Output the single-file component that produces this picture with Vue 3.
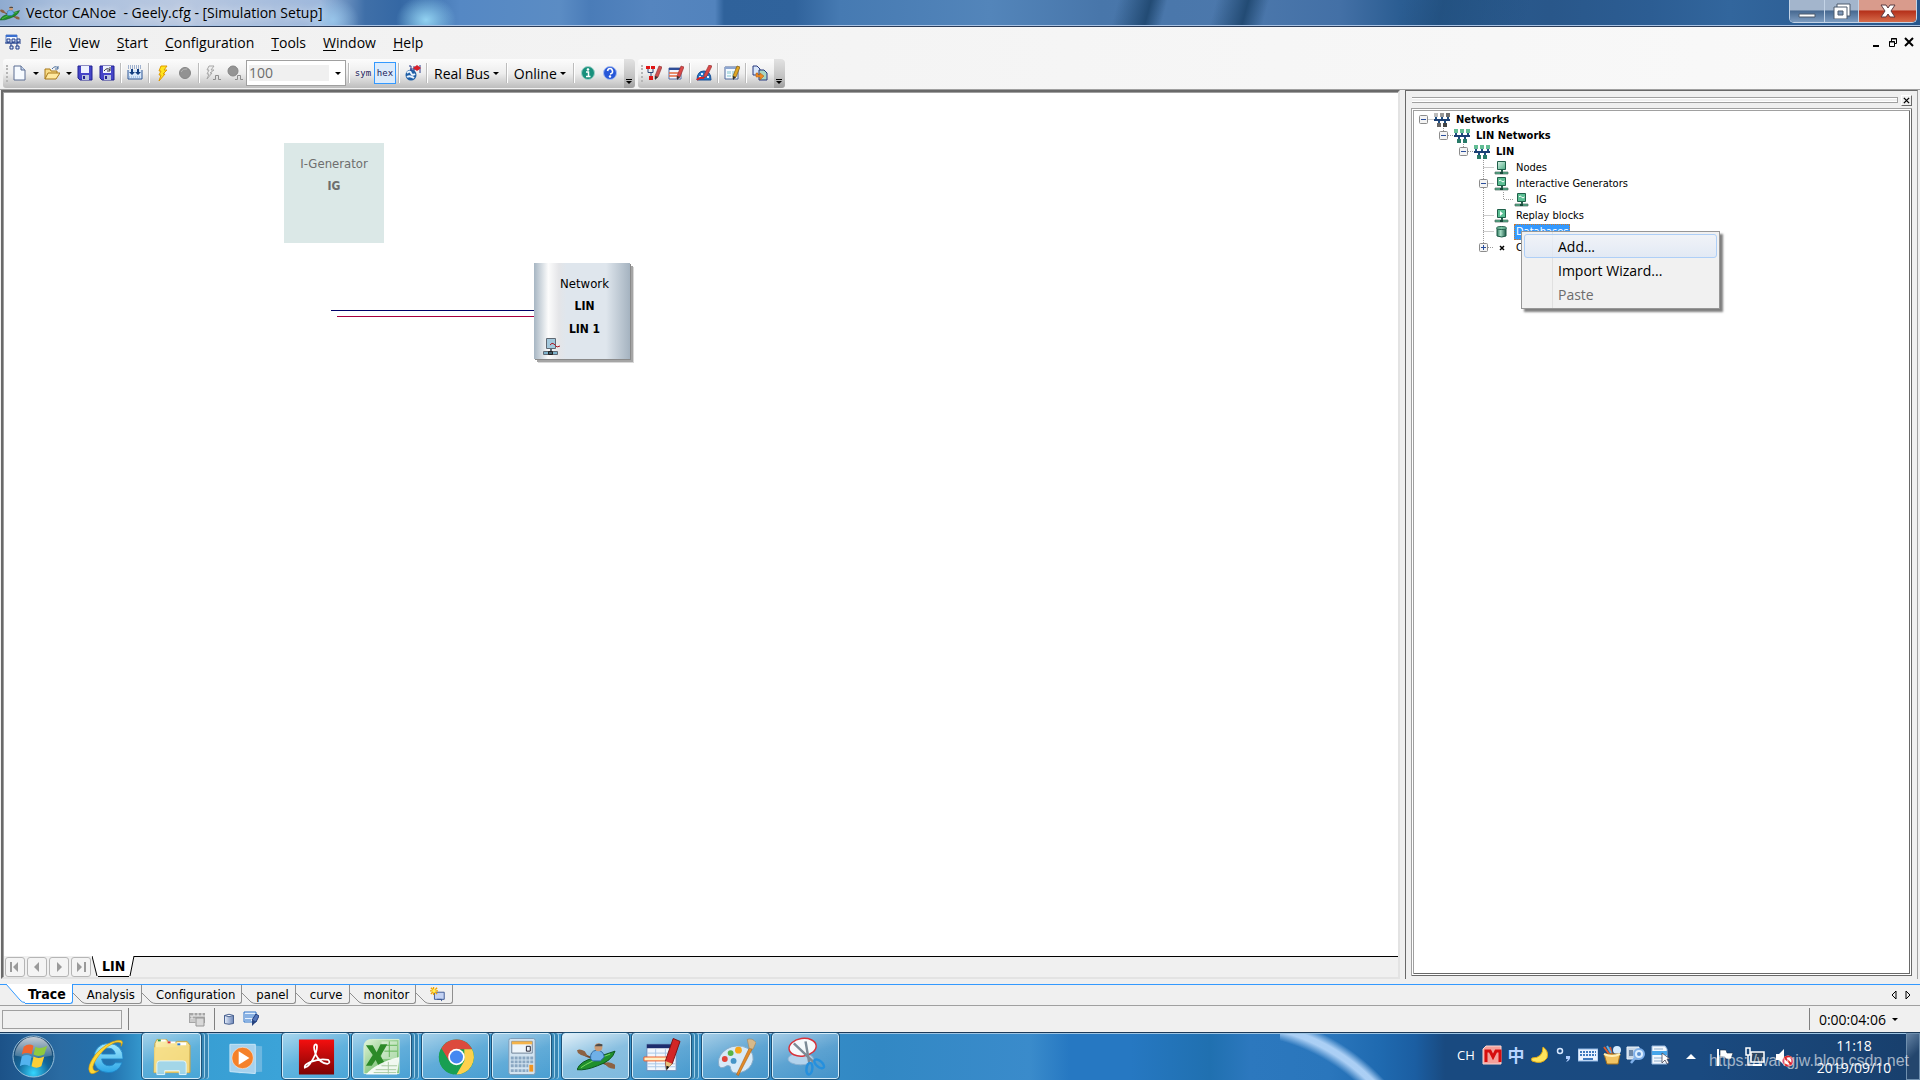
<template>
  <div class="desktop">
    <svg class="defs" width="0" height="0" aria-hidden="true">
      <defs>
        <linearGradient id="gGreen" x1="0" y1="0" x2="1" y2="1"><stop offset="0" stop-color="#d8f2e6" /><stop offset="1" stop-color="#4fae86" /></linearGradient>
        <linearGradient id="gPdf" x1="0" y1="0" x2="0" y2="1"><stop offset="0" stop-color="#f50f0f" /><stop offset="1" stop-color="#7c0303" /></linearGradient>
        <radialGradient id="gOrb" cx=".5" cy=".9" r=".85"><stop offset="0" stop-color="#35d6ff" /><stop offset=".45" stop-color="#13679c" /><stop offset="1" stop-color="#1b3f63" /></radialGradient>
        <linearGradient id="gGloss" x1="0" y1="0" x2="0" y2="1"><stop offset="0" stop-color="#fff" stop-opacity=".75" /><stop offset="1" stop-color="#fff" stop-opacity=".15" /></linearGradient>
        <linearGradient id="gIe" x1="0" y1="0" x2="0" y2="1"><stop offset="0" stop-color="#a6ecff" /><stop offset="1" stop-color="#2aa5e6" /></linearGradient>
        <linearGradient id="gFold" x1="0" y1="0" x2="1" y2="1"><stop offset="0" stop-color="#fdf3b4" /><stop offset="1" stop-color="#e9c760" /></linearGradient>
        <linearGradient id="gXl" x1="0" y1="0" x2="1" y2="1"><stop offset="0" stop-color="#e4f5dc" /><stop offset="1" stop-color="#48a843" /></linearGradient>
        <linearGradient id="gDb" x1="0" y1="0" x2="1" y2="0"><stop offset="0" stop-color="#2f7c60" /><stop offset=".4" stop-color="#a5dcc4" /><stop offset="1" stop-color="#1c5b47" /></linearGradient>
        <linearGradient id="gCyl" x1="0" y1="0" x2="1" y2="0"><stop offset="0" stop-color="#e6eefb" /><stop offset="1" stop-color="#6c86b8" /></linearGradient>
      </defs>
      <symbol id="i-kayak" viewBox="0 0 40 28">
        <path d="M2 8L8 12L34 23L38 24" stroke="#6d4a33" stroke-width="2" fill="none" />
        <path d="M0 7Q3 5 8 8L11 13Q5 14 1 10ZM28 20Q34 18 39 22L39 26Q32 27 28 20Z" fill="#8c6243" />
        <path d="M0 27Q3 18 18 15L39 8Q36 18 21 23Q9 28 0 27Z" fill="#1f8f2c" stroke="#0b541a" />
        <path d="M4 25Q12 19 34 11" stroke="#7ddb62" fill="none" />
        <path d="M14 16Q13 8 20 7Q27 7 28 14L24 18H16Z" fill="#6fb0e8" stroke="#2d679f" />
        <circle cx="22" cy="4" r="4" fill="#c99a74" /><path d="M18 3Q20-1 26 1L26 3Z" fill="#4c4c4c" />
      </symbol>
      <symbol id="i-doc" viewBox="0 0 16 16">
        <path d="M3 1H10L14 5V15H3Z" fill="#f6faff" stroke="#5a6c92" /><path d="M10 1V5H14" fill="#c9d8ef" stroke="#5a6c92" />
      </symbol>
      <symbol id="i-open" viewBox="0 0 16 16">
        <path d="M1 14V4H6L7 6H13V8" fill="#f9dc86" stroke="#a77718" /><path d="M1 14L4 8H16L12 14Z" fill="#ffe9a0" stroke="#a77718" />
        <path d="M8 4Q11 0 14 3M14 1V4H11" fill="none" stroke="#4b6e9c" />
      </symbol>
      <symbol id="i-save" viewBox="0 0 16 16">
        <path d="M1 1H15V15H3L1 13Z" fill="#4545c8" stroke="#222291" /><path d="M4 1H12V8H4Z" fill="#eef2ff" /><path d="M5 10H12V15H5Z" fill="#b9c4de" /><path d="M6 11H8V14H6Z" fill="#222291" />
      </symbol>
      <symbol id="i-saveas" viewBox="0 0 16 16">
        <path d="M1 1H15V15H3L1 13Z" fill="#4545c8" stroke="#222291" /><path d="M4 1H12V8H4Z" fill="#eef2ff" /><path d="M5 10H12V15H5Z" fill="#b9c4de" /><path d="M6 11H8V14H6Z" fill="#222291" /><path d="M5 6Q8 2 11 5M11 2V6H8" fill="none" stroke="#333" />
      </symbol>
      <symbol id="i-box" viewBox="0 0 16 16">
        <path d="M1 1H15M1 3H15" stroke="#4a6fa8" stroke-dasharray="1 1" /><path d="M1 5V14H15V5" fill="#d9e8fa" stroke="#2d5796" /><path d="M5 4V8M11 4V8" stroke="#123d80" stroke-width="2" /><path d="M2 7H8L5 10ZM8 7H14L11 10Z" fill="#123d80" /><path d="M2 12H14" stroke="#7ca4d8" stroke-dasharray="1 1" />
      </symbol>
      <symbol id="i-bolt" viewBox="0 0 16 16">
        <path d="M6 1H12L9 5H12L8 9H10L4 16L6 10H4L6 6H4Z" fill="#ffe51c" stroke="#e09a00" />
      </symbol>
      <symbol id="i-stop" viewBox="0 0 16 16"><circle cx="8" cy="8" r="5.5" fill="#929292" stroke="#858585" /><path d="M4 7Q6 3 10 4" stroke="#b5b5b5" fill="none" /></symbol>
      <symbol id="i-boltstep" viewBox="0 0 16 16">
        <path d="M4 1H9L6 5H9L5 8H7L2 14L4 9H2L4 5H2Z" fill="#eee" stroke="#a7a7a7" /><path d="M8 14.500H10.500V10.500H13.500V14.500H16" fill="none" stroke="#8d8d8d" />
      </symbol>
      <symbol id="i-stopstep" viewBox="0 0 16 16"><circle cx="6" cy="6" r="5" fill="#949494" stroke="#858585" /><path d="M8 14.500H10.500V10.500H13.500V14.500H16" fill="none" stroke="#8d8d8d" /></symbol>
      <symbol id="i-globe" viewBox="0 0 16 16">
        <circle cx="6" cy="10" r="5.5" fill="#1f5fa6" /><path d="M2 8Q5 5 6 8T10 9M2 12Q5 10 9 13" stroke="#e9f4ff" stroke-width="2" fill="none" /><path d="M4 1H6V6M5 4H14M9 1V6M15 0V8" stroke="#2a3f8c" fill="none" /><path d="M8 3L12 0V6ZM16 3L12 0V6Z" fill="#d81f2a" />
      </symbol>
      <symbol id="i-info" viewBox="0 0 16 16"><circle cx="8" cy="8" r="6.5" fill="#17907c" stroke="#9fd1c8" /><circle cx="8" cy="4.5" r="1.3" fill="#fff" /><path d="M6 7H8.500V11.500M6 11.500H10.500" stroke="#fff" stroke-width="1.500" fill="none" /></symbol>
      <symbol id="i-help" viewBox="0 0 16 16"><circle cx="8" cy="8" r="6.5" fill="#2657d8" stroke="#a7bdf2" /><path d="M5.500 6Q6 3.500 8 3.500T10.500 6T8 9" stroke="#fff" stroke-width="1.600" fill="none" /><circle cx="8" cy="11.500" r="1.200" fill="#fff" /></symbol>
      <symbol id="i-netpen" viewBox="0 0 16 16">
        <path d="M0 1H4V4H0ZM5 1H9V4H5ZM3 11H7V15H3Z" fill="#e01414" /><path d="M2 4V7.500H7V4M5 8V11" stroke="#2e4676" fill="none" /><path d="M9 11L13 1L16 2L12 12L9 14Z" fill="#d05050" stroke="#8e2b2b" stroke-width=".6" /><path d="M9 11L12 12L9 15Z" fill="#333" />
      </symbol>
      <symbol id="i-listpen" viewBox="0 0 16 16">
        <path d="M1 3H13V14H1Z" fill="#f3f7ff" stroke="#566fa4" /><path d="M1 3H13V5H1Z" fill="#2f4d97" /><path d="M1 8H13M1 11H9" stroke="#e86a3c" stroke-width="1.500" /><path d="M9 11L13 1L16 2L12 12L9 14Z" fill="#d94848" stroke="#8e2b2b" stroke-width=".6" /><path d="M9 11L12 12L9 15Z" fill="#333" />
      </symbol>
      <symbol id="i-dialpen" viewBox="0 0 16 16">
        <path d="M1 15Q1 6 8 6T15 15Z" fill="#2577c8" stroke="#174d92" /><path d="M3 12H5M5 9H7M11 12H13" stroke="#e6f2ff" stroke-width="2" /><path d="M1 15Q3 12 8 13" stroke="#e02020" stroke-width="2" fill="none" /><path d="M8 10L13 0L16 1L11 11L8 13Z" fill="#d94848" stroke="#8e2b2b" stroke-width=".6" />
      </symbol>
      <symbol id="i-formpen" viewBox="0 0 16 16">
        <path d="M1 2H14V14H1Z" fill="#f5faff" stroke="#4f699c" /><path d="M1 2H14V4H1Z" fill="#8da6d0" /><path d="M3 6H7V9H3ZM8 6H11V12H8ZM3 10H7V12H3Z" fill="#b9dfe6" /><path d="M9 11L13 1L16 2L12 12L9 14Z" fill="#e0a624" stroke="#7b5a15" stroke-width=".7" /><path d="M9 11L12 12L9 15Z" fill="#333" />
      </symbol>
      <symbol id="i-docs" viewBox="0 0 16 16">
        <path d="M1 1H5L8 4V10H1Z" fill="#d8e6fa" stroke="#27387e" /><path d="M7 5H12L15 8V15H7Z" fill="#a9d6c2" stroke="#27387e" /><path d="M4 8V12H8V15L12 11L8 8V10H6V8Z" fill="#f08a24" stroke="#b2590a" stroke-width=".5" />
      </symbol>
      <symbol id="i-winnet" viewBox="0 0 16 16">
        <path d="M1 1H12V9H1Z" fill="#f4f8ff" stroke="#5c7fbe" /><path d="M1 1H12V3H1Z" fill="#3a6fd0" /><path d="M0 9H16M3 7V9M8 6V9M13 6V9M6 9V12M12 9V12" stroke="#1e3a86" /><path d="M2 5H5V8H2ZM7 5H10V8H7ZM12 5H15V8H12ZM5 12H8V15H5ZM11 12H14V15H11Z" fill="#dfe8fa" stroke="#1e3a86" />
      </symbol>
      <symbol id="t-net" viewBox="0 0 16 16">
        <path d="M0 1H4V5H0Z" fill="#bdbdbd" /><path d="M6 1H10V5H6Z" fill="#989898" /><path d="M12 1H16V5H12Z" fill="#707070" /><path d="M2 5V8M8 5V8M14 5V8M5 8V11M11 8V11" stroke="#1d4d80" stroke-width="2" /><path d="M0 7H16V9H0Z" fill="#1b3f73" /><path d="M3 11H7V15H3Z" fill="#666" /><path d="M9 11H13V15H9Z" fill="#444" />
      </symbol>
      <symbol id="t-lin" viewBox="0 0 16 16">
        <path d="M0 1H4V5H0ZM6 1H10V5H6ZM12 1H16V5H12Z" fill="#63bd94" /><path d="M2 5V8M8 5V8M14 5V8M5 8V11M11 8V11" stroke="#1d4d80" stroke-width="2" /><path d="M0 7H16V9H0Z" fill="#1b3f73" /><path d="M3 11H7V15H3ZM9 11H13V15H9Z" fill="#287a68" />
      </symbol>
      <symbol id="t-node" viewBox="0 0 16 16">
        <path d="M3.500 1.500H11.500V9.500H3.500Z" fill="url(#gGreen)" stroke="#20604a" /><path d="M7 10H9V13H7Z" fill="#20604a" /><path d="M1 12H14V14H1Z" fill="#4fae86" stroke="#4d6960" stroke-width=".7" /><path d="M6 12H9V14H6Z" fill="#18483a" />
      </symbol>
      <symbol id="t-gen" viewBox="0 0 16 16">
        <path d="M3.500 1.500H11.500V9.500H3.500Z" fill="#5cbf94" stroke="#20604a" /><path d="M5 5Q6 3 7.500 5T10.500 5" stroke="#fff" fill="none" /><path d="M7 10H9V13H7Z" fill="#20604a" /><path d="M1 12H14V14H1Z" fill="#4fae86" stroke="#4d6960" stroke-width=".7" /><path d="M6 12H9V14H6Z" fill="#18483a" />
      </symbol>
      <symbol id="t-replay" viewBox="0 0 16 16">
        <path d="M3.500 1.500H11.500V9.500H3.500Z" fill="#5cbf94" stroke="#20604a" /><path d="M6 3L9 5.500L6 8Z" fill="#fff" /><path d="M7 10H9V13H7Z" fill="#20604a" /><path d="M1 12H14V14H1Z" fill="#4fae86" stroke="#4d6960" stroke-width=".7" /><path d="M6 12H9V14H6Z" fill="#18483a" />
      </symbol>
      <symbol id="t-db" viewBox="0 0 16 16"><path d="M3 4V12Q8 14 12 12V4Z" fill="url(#gDb)" stroke="#1c5b47" /><ellipse cx="7.500" cy="4" rx="5" ry="1.500" fill="#7fc6a6" stroke="#1c5b47" /></symbol>
      <symbol id="t-chan" viewBox="0 0 16 16"><path d="M6 6L10 10M10 6L6 10" stroke="#000" stroke-width="1.500" /></symbol>
      <symbol id="i-newtab" viewBox="0 0 18 16">
        <path d="M5 6H16V14H5Z" fill="#c3d2f3" stroke="#33508e" /><path d="M8 14H13V16" stroke="#33508e" fill="none" /><path d="M4 0V9M0 4.500H9M1 1L8 8M8 1L1 8" stroke="#f0a400" stroke-width="1.500" /><circle cx="4.500" cy="4.500" r="2" fill="#ffee58" />
      </symbol>
      <symbol id="i-kbdoff" viewBox="0 0 16 16"><path d="M0 2H16V12H0Z" fill="#a5a5a5" /><path d="M1 5H16M1 8H8M5 2V5M9 2V5M13 2V5M3 5V8M7 8V12M1 10H8" stroke="#efefef" /><path d="M7 7H15V15H7Z" fill="#d8d8d8" stroke="#969696" /></symbol>
      <symbol id="i-cyl" viewBox="0 0 16 16"><path d="M3.500 4.500H12.500V12.500Q8 14 3.500 12.500Z" fill="url(#gCyl)" stroke="#4b6391" /><path d="M3.500 4.500Q8 2 12.500 4.500Q8 7 3.500 4.500Z" fill="#f2f6ff" stroke="#4b6391" /></symbol>
      <symbol id="i-note" viewBox="0 0 16 16"><path d="M1 1H13V11H1Z" fill="#e5f1ff" stroke="#2c72c8" /><path d="M2 4H12M2 6H12M2 9H8" stroke="#2c72c8" /><path d="M9 9L13 3L16 5L13 11Z" fill="#5377bc" stroke="#233e7c" /><path d="M9 9L13 11L9 15Z" fill="#27437e" /></symbol>
      <symbol id="k-start" viewBox="0 0 44 44">
        <circle cx="22" cy="22" r="21" fill="url(#gOrb)" stroke="#9cc3dc" /><path d="M3 21A19 19 0 0 1 41 21Q22 26 3 21Z" fill="url(#gGloss)" />
        <path d="M12 12Q17 8 22 11L20 20Q15 17 10 20Z" fill="#f0652f" /><path d="M24 12Q29 15 36 11L33 20Q27 23 22 20Z" fill="#8fca3f" /><path d="M10 22Q15 19 20 22L18 32Q13 29 8 32Z" fill="#53b3ef" /><path d="M22 22Q27 25 33 22L30 32Q25 35 20 32Z" fill="#fbcf38" />
      </symbol>
      <symbol id="k-ie" viewBox="0 0 40 40">
        <path d="M37 22H15Q16 29 23 29Q27 29 29 26H36Q32 36 22 36Q7 35 7 21Q8 7 22 6Q37 7 37 22ZM15 17H29Q28 11 22 11Q16 11 15 17Z" fill="url(#gIe)" stroke="#1e86c9" stroke-width=".8" />
        <path d="M35 9Q39 2 31 3Q20 5 9 17Q-1 30 3 36Q5 39 12 34Q6 36 6 30Q8 22 17 13Q28 3 34 5Q36 6 35 9Z" fill="#ffd735" stroke="#d59b09" stroke-width=".7" />
      </symbol>
      <symbol id="k-folder" viewBox="0 0 40 40">
        <path d="M3 6L5 2H15L17 5H24L26 4H36L39 8V36H2Z" fill="url(#gFold)" stroke="#c9a646" /><path d="M6 2H14V4H6ZM16 4H24V6H16ZM26 5H35V8H26Z" fill="#fff" /><path d="M6 2H9V4H6Z" fill="#2d9a46" /><path d="M16 4H19V6H16Z" fill="#d33" /><path d="M26 6H29V8H26Z" fill="#2a7bd0" />
        <path d="M2 10H38V36H2Z" fill="#f5dc83" opacity=".8" /><path d="M5 38V27Q5 24 8 24H32Q35 24 35 27V38H28V34H13V38Z" fill="#9fd6ee" stroke="#e5f8ff" opacity=".95" />
      </symbol>
      <symbol id="k-media" viewBox="0 0 40 40">
        <path d="M12 7L36 9V35L12 37Z" fill="#8dc4e6" opacity=".6" /><path d="M3 7H29V37L3 35Z" fill="#a6d2ee" stroke="#c7e6f8" /><circle cx="16" cy="21" r="11" fill="#f5812a" stroke="#fff" stroke-opacity=".5" /><path d="M12 14L23 21L12 28Z" fill="#fff" />
      </symbol>
      <symbol id="k-pdf" viewBox="0 0 40 40">
        <path d="M2 2H38V38H2Z" fill="url(#gPdf)" /><path d="M8 31Q13 30 19 17Q22 7 19 7Q16 8 19 17Q23 26 31 27Q35 26 32 23Q24 21 14 25Q7 28 8 31Z" fill="none" stroke="#fff" stroke-width="1.800" />
      </symbol>
      <symbol id="k-excel" viewBox="0 0 40 40">
        <path d="M2 10Q2 2 10 2H38V37H2Z" fill="url(#gXl)" stroke="#d9f0d3" /><path d="M20 4H36V22H20Z" fill="#f4fbf1" opacity=".5" /><path d="M23 8H36M23 14H36M28 4V20" stroke="#63b457" /><path d="M4 8H11L15 15L19 7H26L19 19L25 29H17L14 23L10 29H4L11 18Z" fill="#2c8a28" /><path d="M4 38Q14 26 38 20V24L36 38Z" fill="#fff" opacity=".9" /><path d="M14 33H35M12 36H35M20 29H36M27 25V37" stroke="#a8c9a0" />
      </symbol>
      <symbol id="k-chrome" viewBox="0 0 40 40">
        <circle cx="20" cy="20" r="18" fill="#189f52" /><path d="M4.400 11A18 18 0 0 1 35.600 11L36 12H20L12 24Z" fill="#dc4a3d" /><path d="M36 12A18 18 0 0 1 20 38L28 24V12Z" fill="#fdd14d" /><path d="M4.400 11L12.500 24L20 28L17 38A18 18 0 0 1 4.400 11Z" fill="#189f52" /><circle cx="20" cy="20" r="8.500" fill="#fff" /><circle cx="20" cy="20" r="6.700" fill="#4688f1" />
      </symbol>
      <symbol id="k-calc" viewBox="0 0 40 40">
        <rect x="7" y="1" width="27" height="37" rx="2" fill="#d3e4f1" stroke="#7d9bb5" /><path d="M10 4H31V16H10Z" fill="#eef5fb" stroke="#6d8297" /><path d="M10 4H31V7H10Z" fill="#f4b34a" /><path d="M25 9H29V14H25Z" fill="none" stroke="#223" stroke-width="1" /><path d="M9 21H32M9 25H32M9 29H27M9 34H27" stroke="#8aa7c2" stroke-width="3" stroke-dasharray="3 1" /><path d="M28 28H32V35H28Z" fill="#f09523" />
      </symbol>
      <symbol id="k-panel" viewBox="0 0 40 40">
        <path d="M5 7H35V34H5Z" fill="#f2f7fd" stroke="#6b8fbd" /><path d="M5 7H35V11H5Z" fill="#1d2d6d" /><path d="M5 16H34M5 27H34M5 30H34M14 12V33M24 12V33" stroke="#a8c6e6" /><path d="M2 20H28V24H2Z" fill="#fff1c4" stroke="#f05a28" /><path d="M24 24L32 1L39 4L31 27L25 32Z" fill="#d32626" stroke="#7d1212" /><path d="M24 24L31 27L25 33Z" fill="#e5c17a" /><path d="M25 29L28 30L25 34Z" fill="#111" />
      </symbol>
      <symbol id="k-paint" viewBox="0 0 40 40">
        <path d="M2 29Q0 21 6 15Q14 7 26 9Q38 12 37 23Q35 33 24 36Q15 38 14 32Q14 28 10 29Q4 33 2 29Z" fill="#d7eaf8" stroke="#87acc9" /><circle cx="17" cy="24" r="3" fill="#4695c7" /><circle cx="8" cy="22" r="3" fill="#e0453a" /><circle cx="14" cy="16" r="3" fill="#57b446" /><circle cx="22" cy="13" r="3.500" fill="#f7a61c" /><path d="M33 11L36 12L22 39L20 38Z" fill="#e28b2a" stroke="#a85f13" stroke-width=".6" /><path d="M31 2Q36 0 40 5L37 12L33 11Z" fill="#d7b98a" stroke="#a58252" stroke-width=".6" />
      </symbol>
      <symbol id="k-snip" viewBox="0 0 40 40">
        <ellipse cx="14" cy="22" rx="13" ry="6" fill="#b3d3ec" stroke="#8fb4d3" /><ellipse cx="16" cy="10" rx="14" ry="9" fill="#f6f9fc" stroke="#d8323a" stroke-width="1.500" transform="rotate(-8 16 10)" /><path d="M7 6L27 25M19 4L23 27" stroke="#7c8a96" stroke-width="2.500" /><ellipse cx="23" cy="32" rx="3" ry="6" fill="none" stroke="#2690dd" stroke-width="2.500" transform="rotate(8 23 32)" /><ellipse cx="33" cy="27" rx="6" ry="3" fill="none" stroke="#2690dd" stroke-width="2.500" transform="rotate(40 33 27)" />
      </symbol>
      <symbol id="y-m" viewBox="0 0 20 20"><path d="M4 1H19V19H1V4Z" fill="#f4a09a" stroke="#fbd6d2" /><path d="M4 17V6H8L11 12L14 6H18V17" fill="none" stroke="#d60d0d" stroke-width="3" /></symbol>
      <symbol id="y-moon" viewBox="0 0 20 20"><path d="M13 2Q19 6 17 13Q12 20 2 16Q1 14 2 13Q13 13 13 2Z" fill="#ffe45c" stroke="#e3ac14" /></symbol>
      <symbol id="y-punct" viewBox="0 0 20 20"><circle cx="6" cy="6" r="2.500" fill="none" stroke="#d7e8ff" stroke-width="1.500" /><path d="M12 11H16Q17 15 12 17L14 14H12Z" fill="#aecdff" /></symbol>
      <symbol id="y-kbd" viewBox="0 0 20 20"><path d="M0 4H20V16H0Z" fill="#eaf3ff" stroke="#8db6e6" /><path d="M2 7H18M2 10H18" stroke="#3e79bd" stroke-width="2" stroke-dasharray="2 1" /><path d="M5 14H15" stroke="#3e79bd" stroke-width="2" /></symbol>
      <symbol id="y-basket" viewBox="0 0 20 20"><path d="M2 2L8 10M8 2L10 10" stroke="#de5b2c" stroke-width="2" /><path d="M5 1L9 8" stroke="#5cb0e6" stroke-width="2" /><circle cx="15" cy="5" r="4" fill="#d5ebff" /><path d="M2 9H18L16 19H5Z" fill="#f1c463" stroke="#a5731e" /><path d="M2 9Q10 13 18 9" fill="none" stroke="#fff0b8" stroke-width="2" /></symbol>
      <symbol id="y-find" viewBox="0 0 20 20"><path d="M1 2H13V14H1Z" fill="#c9d8e8" stroke="#eef5fc" /><path d="M3 5H7V11H3Z" fill="#6d88a8" /><circle cx="13" cy="9" r="5" fill="#dceeff" stroke="#7fb0ea" stroke-width="2" /><circle cx="13" cy="9" r="2" fill="#5a8fd0" /><path d="M9 13L5 18" stroke="#7fb0ea" stroke-width="2.500" /></symbol>
      <symbol id="y-page" viewBox="0 0 20 20"><path d="M2 1H15L17 4V19H2Z" fill="#f2f7fd" stroke="#9bbbe0" /><path d="M2 6H17V10H2Z" fill="#46a5ea" /><path d="M4 4H13M4 13H12M4 16H12" stroke="#90afcf" /><path d="M12 8V18L15 15L17 19L19 18L17 14H20Z" fill="#fff" stroke="#445" stroke-width=".8" /></symbol>
      <symbol id="y-flag" viewBox="0 0 20 20"><path d="M3 2V19" stroke="#fff" stroke-width="2" /><path d="M5 3H11L12 6H18L16 12H11L10 10H5Z" fill="#fff" stroke="#1a2c44" stroke-width=".6" /></symbol>
      <symbol id="y-mon" viewBox="0 0 20 20"><path d="M6 5H19V15H6Z" fill="#2c4560" stroke="#fff" stroke-width="1.500" /><path d="M8 18H17" stroke="#fff" stroke-width="2" /><path d="M1 1H5V8H1ZM3 8V18H8" fill="none" stroke="#fff" stroke-width="1.500" /></symbol>
      <symbol id="y-mute" viewBox="0 0 20 20"><path d="M1 7H4L9 2V18L4 13H1Z" fill="#fff" /><circle cx="13" cy="14" r="5.500" fill="#fff" /><circle cx="13" cy="14" r="4.500" fill="none" stroke="#dc1f26" stroke-width="2" /><path d="M10 11L16 17" stroke="#dc1f26" stroke-width="2" /></symbol>
    </svg>

    <header class="title-bar">
      <svg class="app-icon"><use href="#i-kayak" /></svg>
      <h1>Vector CANoe &nbsp;- Geely.cfg - [Simulation Setup]</h1>
      <div class="win-buttons">
        <button class="win-btn min" aria-label="Minimize"><svg viewBox="0 0 20 16"><path d="M2 11H18V14H2Z" fill="#fff" stroke="#4d5a6c" /></svg></button>
        <button class="win-btn max" aria-label="Restore"><svg viewBox="0 0 20 16"><path d="M5 1H18V13H5Z" fill="#fff" stroke="#4d5a6c" /><path d="M2 4H15V16H2Z" fill="#fff" stroke="#4d5a6c" /><path d="M6 8H11V12H6Z" fill="#7f98b8" stroke="#4d5a6c" /></svg></button>
        <button class="win-btn close" aria-label="Close"><svg viewBox="0 0 20 16"><path d="M3 2H8L10 5L12 2H17L13 8L17 14H12L10 11L8 14H3L7 8Z" fill="#fff" stroke="#5b3a40" /></svg></button>
      </div>
    </header>

    <nav class="menu-bar">
      <svg class="ic"><use href="#i-winnet" /></svg>
      <button v-for="m in menus" :key="m"><u>{{ m[0] }}</u>{{ m.slice(1) }}</button>
      <div class="mdi-buttons">
        <button aria-label="Minimize document"><svg viewBox="0 0 10 10"><path d="M1 8H7V10H1Z" /></svg></button>
        <button aria-label="Restore document"><svg viewBox="0 0 10 10"><path d="M3.500 4V1.500H8.500V6.500H7M3 2H9M1.500 4.500H6.500V9.500H1.500ZM1 5H7" fill="none" stroke="#000" /></svg></button>
        <button aria-label="Close document"><svg viewBox="0 0 10 10"><path d="M1 1L9 9M9 1L1 9" stroke="#000" stroke-width="2" /></svg></button>
      </div>
    </nav>

    <div class="toolbars">
      <div class="toolbar">
        <span class="grip"></span>
        <template v-for="(t, i) in mainTools" :key="i">
          <span v-if="t === '|'" class="sep"></span>
          <button v-else-if="t === 'v'" class="drop" aria-label="More"><i class="caret"></i></button>
          <button v-else class="tool" :aria-label="t"><svg class="ic"><use :href="'#i-' + t" /></svg></button>
        </template>
        <div class="combo">
          <select disabled aria-label="Step width"><option>100</option></select>
          <i class="caret"></i>
        </div>
        <span class="sep"></span>
        <button class="tool mono">sym</button>
        <button class="tool mono on">hex</button>
        <span class="sep"></span>
        <button class="tool" aria-label="globe"><svg class="ic"><use href="#i-globe" /></svg></button>
        <span class="sep"></span>
        <button class="text-drop">Real Bus<i class="caret"></i></button>
        <span class="sep"></span>
        <button class="text-drop">Online<i class="caret"></i></button>
        <span class="sep"></span>
        <button class="tool" aria-label="info"><svg class="ic"><use href="#i-info" /></svg></button>
        <button class="tool" aria-label="help"><svg class="ic"><use href="#i-help" /></svg></button>
        <button class="cap" aria-label="Toolbar options"><i class="caret"></i></button>
      </div>
      <div class="toolbar">
        <span class="grip"></span>
        <template v-for="(t, i) in panelTools" :key="i">
          <span v-if="t === '|'" class="sep"></span>
          <button v-else class="tool" :aria-label="t"><svg class="ic"><use :href="'#i-' + t" /></svg></button>
        </template>
        <button class="cap" aria-label="Toolbar options"><i class="caret"></i></button>
      </div>
    </div>

    <main class="workspace">
      <section class="setup">
        <div class="canvas">
          <div class="wire high"></div>
          <div class="wire low"></div>
          <div class="node generator">
            <span>I-Generator</span>
            <b>IG</b>
          </div>
          <div class="node network">
            <span>Network</span>
            <b>LIN</b>
            <b>LIN 1</b>
            <svg class="net-icon" viewBox="0 0 17 17">
              <path d="M3.500 .5H12.500V10.500H3.500Z" fill="#a3c8dc" stroke="#5f6873" /><path d="M7 11H9V14H7Z" fill="#5f6873" /><path d="M.5 13.500H14.500V16.500H.5Z" fill="#7fb4cc" stroke="#5f6873" /><path d="M5.500 13.500H9.500V16.500H5.500Z" fill="#3f5e6b" stroke="#222" /><path d="M7 7Q9 4 11 6T14 9L17 8" fill="none" stroke="#b01722" />
            </svg>
          </div>
        </div>
        <div class="sheet-bar">
          <button v-for="(d, i) in sheetNav" :key="i" class="sheet-nav" aria-label="Scroll sheets"><svg viewBox="0 0 12 12"><path :d="d" fill="#9a9a9a" /></svg></button>
          <button class="sheet-tab">
            <svg viewBox="0 0 6 21" preserveAspectRatio="none"><path d="M0 0H6V20H5Z" fill="#fff" /><path d="M0 0L5 20" stroke="#000" /></svg>
            <span>LIN</span>
            <svg viewBox="0 0 6 21" preserveAspectRatio="none"><path d="M0 0H5L1 20H0Z" fill="#fff" /><path d="M5 0L1 20" stroke="#000" /></svg>
          </button>
          <span class="sheet-rest"></span>
        </div>
      </section>

      <aside class="side">
        <div class="side-head">
          <span class="side-grip"></span>
          <button aria-label="Close pane"><svg viewBox="0 0 8 8"><path d="M1 1L7 7M7 1L1 7" stroke="#000" stroke-width="1.500" /></svg></button>
        </div>
        <ul class="tree" role="tree">
          <li v-for="row in tree" :key="row.label" role="treeitem">
            <svg v-for="(g, i) in row.guides" :key="i" class="guide" viewBox="0 0 20 16">
              <path v-if="guidePaths[g[0]]" :d="guidePaths[g[0]]" fill="none" stroke="#9a9a9a" stroke-dasharray="1 1" />
              <g v-if="g[1]">
                <rect x="5.500" y="3.500" width="8" height="8" rx="1" fill="#f4f4f4" stroke="#8c8c8c" />
                <path :d="g[1] === '+' ? 'M7 7.500H12M9.500 5V10' : 'M7 7.500H12'" stroke="#2b4f9c" />
              </g>
            </svg>
            <svg class="ic"><use :href="'#t-' + row.icon" /></svg>
            <span :class="{ bold: row.bold, selected: row.selected }">{{ row.label }}</span>
          </li>
        </ul>
        <div class="context-menu" role="menu">
          <button role="menuitem" class="hot">Add...</button>
          <button role="menuitem">Import Wizard...</button>
          <button role="menuitem" disabled>Paste</button>
        </div>
      </aside>
    </main>

    <div class="page-tabs">
      <button v-for="p in pages" :key="p" class="page-tab" :class="{ active: p === 'Trace' }">
        <svg v-if="p === 'Trace'" class="lead" viewBox="0 0 24 19"><path d="M5 0L19 16Q21 18.500 24 18.500V0Z" fill="#fff" /><path d="M0 0H5L19 16Q21 18.500 24 18.500" fill="none" stroke="#3399ff" /></svg>
        <svg v-else class="slant" viewBox="0 0 14 19"><path d="M0 8L9 17Q11 18.500 14 18.500" fill="none" stroke="#8f8f8f" /></svg>
        <span>{{ p }}</span>
      </button>
      <button class="page-tab" aria-label="New desktop">
        <svg class="slant" viewBox="0 0 14 19"><path d="M0 8L9 17Q11 18.500 14 18.500" fill="none" stroke="#8f8f8f" /></svg>
        <span><svg class="ic"><use href="#i-newtab" /></svg></span>
      </button>
      <div class="page-scroll">
        <button aria-label="Scroll left"><svg viewBox="0 0 8 10"><path d="M6 1V9L2 5Z" fill="none" stroke="#000" /></svg></button>
        <button aria-label="Scroll right"><svg viewBox="0 0 8 10"><path d="M2 1V9L6 5Z" fill="none" stroke="#000" /></svg></button>
      </div>
    </div>

    <footer class="status-bar">
      <span class="progress"></span>
      <span class="cell kbd"><svg class="ic"><use href="#i-kbdoff" /></svg></span>
      <span class="cell tools"><svg class="ic"><use href="#i-cyl" /></svg><svg class="ic"><use href="#i-note" /></svg></span>
      <button class="timer">0:00:04:06<i class="caret"></i></button>
    </footer>

    <div class="taskbar">
      <button class="start" aria-label="Start"><svg><use href="#k-start" /></svg></button>
      <button v-for="t in tasks" :key="t.icon" class="task" :class="t.state" :aria-label="t.icon">
        <svg><use :href="'#' + t.icon" /></svg>
      </button>
      <div class="tray">
        <span class="lang">CH</span>
        <span class="lb"><svg><use href="#y-m" /></svg></span>
        <span class="lb zh">中</span>
        <span v-for="n in langIcons" :key="n" class="lb"><svg><use :href="'#y-' + n" /></svg></span>
        <button class="more" aria-label="Show hidden icons"></button>
        <span v-for="n in ['flag', 'mon', 'mute']" :key="n" class="sys"><svg><use :href="'#y-' + n" /></svg></span>
        <div class="clock"><span>11:18</span><span>2019/09/10</span></div>
        <button class="show-desktop" aria-label="Show desktop"></button>
      </div>
      <span class="watermark">https://wangjw.blog.csdn.net</span>
    </div>
  </div>
</template>

<script setup>
const menus = ['File', 'View', 'Start', 'Configuration', 'Tools', 'Window', 'Help']
const mainTools = ['doc', 'v', 'open', 'v', 'save', 'saveas', '|', 'box', '|', 'bolt', 'stop', '|', 'boltstep', 'stopstep']
const panelTools = ['netpen', 'listpen', '|', 'dialpen', '|', 'formpen', '|', 'docs']
const pages = ['Trace', 'Analysis', 'Configuration', 'panel', 'curve', 'monitor']
const langIcons = ['moon', 'punct', 'kbd', 'basket', 'find', 'page']

const sheetNav = [
  'M1 1H3V11H1ZM9 1V11L4 6Z',
  'M8 1V11L3 6Z',
  'M4 1V11L9 6Z',
  'M2 1V11L7 6ZM9 1H11V11H9Z',
]

// first character: line shape, second: expander sign
const guidePaths = {
  h: 'M9.5 7.500H20',
  l: 'M9.5 0V7.500H20',
  t: 'M9.5 0V16M9.5 7.500H20',
  v: 'M9.5 0V16',
}
const tree = [
  { label: 'Networks', icon: 'net', bold: true, guides: ['h-'] },
  { label: 'LIN Networks', icon: 'lin', bold: true, guides: [' ', 'l-'] },
  { label: 'LIN', icon: 'lin', bold: true, guides: [' ', ' ', 'l-'] },
  { label: 'Nodes', icon: 'node', guides: [' ', ' ', ' ', 't'] },
  { label: 'Interactive Generators', icon: 'gen', guides: [' ', ' ', ' ', 't-'] },
  { label: 'IG', icon: 'gen', guides: [' ', ' ', ' ', 'v', 'l'] },
  { label: 'Replay blocks', icon: 'replay', guides: [' ', ' ', ' ', 't'] },
  { label: 'Databases', icon: 'db', selected: true, guides: [' ', ' ', ' ', 't'] },
  { label: 'Channels', icon: 'chan', guides: [' ', ' ', ' ', 'l+'] },
]

const tasks = [
  { icon: 'k-ie', state: '' },
  { icon: 'k-folder', state: 'open stack' },
  { icon: 'k-media', state: '' },
  { icon: 'k-pdf', state: 'open' },
  { icon: 'k-excel', state: 'open stack' },
  { icon: 'k-chrome', state: 'open' },
  { icon: 'k-calc', state: 'open stack' },
  { icon: 'i-kayak', state: 'open current' },
  { icon: 'k-panel', state: 'open stack' },
  { icon: 'k-paint', state: 'open' },
  { icon: 'k-snip', state: 'open' },
]
</script>

<style>
body { margin: 0; }
</style>

<style scoped>
.desktop {
  display: flex;
  flex-direction: column;
  min-height: 100vh;
  background: #f0f0f0;
  color: #000;
  font-family: "Open Sans", "Noto Sans", "Noto Sans CJK SC", sans-serif;
  font-size: 14px;
}
.desktop *, .desktop *::before, .desktop *::after { box-sizing: border-box; }
.defs { position: absolute; }
button {
  display: inline-flex;
  align-items: center;
  justify-content: center;
  margin: 0;
  padding: 0;
  border: 0;
  background: none;
  color: inherit;
  font: inherit;
  white-space: nowrap;
}
.ic { width: 16px; height: 16px; flex: none; }
.caret {
  width: 0;
  height: 0;
  border: 3px solid transparent;
  border-top-color: #000;
  border-bottom: 0;
}

.title-bar {
  display: flex;
  align-items: center;
  height: 27px;
  border-bottom: 1px solid #2b3c58;
  box-shadow: inset 0 -1px 0 #a9c3e4;
  background:
    radial-gradient(ellipse 30px 24px at 426px 20px, rgba(150, 215, 245, .95), transparent),
    radial-gradient(ellipse 26px 22px at 333px 20px, rgba(160, 210, 245, .7), transparent),
    linear-gradient(105deg, transparent 1080px, rgba(30, 70, 110, .9) 1112px, transparent 1128px, transparent 1175px, rgba(30, 70, 110, .9) 1206px, transparent 1226px, transparent 1355px, rgba(30, 75, 120, .6) 1395px, transparent 1480px),
    linear-gradient(90deg, #8fabd0 0, #a9bfdd 60px, #b9c8e0 180px, #9eb8dc 320px, #3f6fa8 365px, #3568a4 400px, #5588c4 460px, #5b8cc4 560px, #4a7cb8 590px, #5585bf 650px, #5283bd 715px, #2f629b 724px, #30639c 795px, #467ab2 840px, #5385ba 990px, #4876aa 1100px, #4c78ac 1240px, #4370a6 1340px, #2b5d92 1400px, #29578a 1550px, #2c5d93 1650px, #32669d 1730px, #27568b 100%);
}
.app-icon { width: 20px; height: 15px; }
.title-bar h1 {
  margin: 0 0 0 6px;
  font-size: 14px;
  font-weight: 400;
  line-height: 26px;
  text-shadow: 0 0 8px rgba(255, 255, 255, .9);
}
.win-buttons { display: flex; align-self: flex-start; margin: 0 3px 0 auto; border: 1px solid #c3d3e6; border-top: 0; border-radius: 0 0 5px 5px; overflow: hidden; }
.win-btn { width: 34px; height: 22px; background: linear-gradient(#a3b5cc 0 45%, #476991 50%, #7d9cc0); }
.win-btn + .win-btn { border-left: 1px solid #c3d3e6; }
.win-btn.close { width: 58px; background: linear-gradient(#d99b8c 0 45%, #b5301a 50%, #d66b4a); }
.win-btn svg { width: 20px; height: 16px; }

.menu-bar {
  display: flex;
  align-items: center;
  gap: 17px;
  height: 32px;
  padding: 0 6px 2px 5px;
  background: linear-gradient(90deg, #f0f0f0, #f9f9f9);
}
.menu-bar .ic { margin-right: -8px; }
.menu-bar u { text-underline-offset: 2px; }
.mdi-buttons { display: flex; gap: 6px; margin-left: auto; }
.mdi-buttons svg { width: 10px; height: 10px; }

.toolbars {
  display: flex;
  gap: 3px;
  height: 30px;
  padding: 0 3px 1px;
  background: linear-gradient(90deg, #f0f0f0, #f9f9f9);
}
.toolbar {
  display: flex;
  align-items: stretch;
  border-radius: 3px;
  background: linear-gradient(#fcfcfc, #ededed 50%, #bdbdbd);
}
.grip { width: 2px; margin: 6px 0 6px 3px; border-left: 2px dotted #b5b5b5; }
.sep { width: 2px; margin: 4px 2px 5px; border-left: 1px solid #bcbcbc; border-right: 1px solid #fff; }
.tool { width: 22px; padding-bottom: 1px; }
.drop { width: 11px; }
.combo { display: flex; align-items: center; width: 100px; margin: 1px 0 2px; padding: 0 4px 0 2px; border: 1px solid #a0a0a0; background: #fff; }
.combo select {
  flex: 1;
  min-width: 0;
  height: 16px;
  margin-right: 6px;
  padding: 0;
  border: 0;
  appearance: none;
  background: #f0f0f0;
  color: #6d6d6d;
  font: inherit;
  line-height: 16px;
  opacity: 1;
}
.mono { font: 9px "DejaVu Sans Mono", monospace; color: #1b1b5c; }
.mono.on { height: 22px; margin-top: 3px; border: 1px solid #3399ff; background: #dcebfb; }
.text-drop { gap: 3px; padding: 0 5px 0 4px; }
.cap {
  flex-direction: column;
  justify-content: flex-end;
  gap: 1px;
  width: 11px;
  margin-left: 3px;
  padding-bottom: 4px;
  border-radius: 0 4px 4px 0;
  background: linear-gradient(#e2e2e2, #c4c4c4 60%, #9f9f9f);
}
.cap::before { content: ""; width: 6px; height: 1px; background: #000; }

.workspace { display: flex; flex: 1; border-top: 1px solid #a0a0a0; }
.setup {
  display: flex;
  flex: 1;
  flex-direction: column;
  min-width: 0;
  margin: 0 0 5px 1px;
  border: 2px solid #696969;
  border-color: #696969 #e3e3e3 #e3e3e3 #696969;
  box-shadow: inset 1px 1px 0 #a0a0a0;
  padding: 1px 0 0 1px;
}
.canvas { position: relative; flex: 1; min-height: 300px; background: #fff; }
.node {
  position: absolute;
  display: flex;
  flex-direction: column;
  align-items: center;
  font-family: "DejaVu Sans Condensed", "Open Sans", sans-serif;
  font-size: 12px;
  line-height: 23px;
}
.node span { font-size: 13px; }
.generator { left: 280px; top: 50px; width: 100px; height: 100px; padding-top: 9px; background: #dbe8e7; color: #6e6e6e; }
.network {
  left: 530px;
  top: 170px;
  width: 96px;
  height: 96px;
  padding: 9px 0 0 5px;
  background: linear-gradient(90deg, #a7b6c3, #fcfcfc 15%, #e4e5e8 26%, #dfe6ed 34%, #dfe6ed 75%, #a5b3c0);
  box-shadow: 1px 1px 0 #8a8a8a, 3px 3px 0 #a5a5a5, 4px 4px 0 #d8d8d8;
}
.net-icon { position: absolute; left: 9px; bottom: 4px; width: 17px; height: 17px; }
.wire { position: absolute; height: 1px; }
.wire.high { left: 327px; top: 217px; width: 203px; background: #000066; }
.wire.low { left: 333px; top: 223px; width: 197px; background: #a8003c; }

.sheet-bar { display: flex; height: 21px; }
.sheet-nav { width: 20px; height: 20px; margin: 1px 1px 0; border: 1px solid #b5b5b5; border-radius: 3px; background: #f4f4f4; }
.sheet-nav svg { width: 12px; height: 12px; }
.sheet-tab { align-items: stretch; font: bold 14px "DejaVu Sans Condensed", sans-serif; }
.sheet-tab svg { width: 6px; height: 21px; }
.sheet-tab span { padding: 0 4px; border-bottom: 1px solid #000; background: #fff; line-height: 21px; }
.sheet-rest { flex: 1; margin-left: -1px; border-top: 1px solid #000; }

.side {
  position: relative;
  display: flex;
  flex-direction: column;
  width: 513px;
  margin: 0 2px 5px 5px;
  padding: 3px 5px 3px 5px;
  border-left: 1px solid #696969;
  border-right: 1px solid #a0a0a0;
  border-top: 1px solid #696969;
}
.side-head { display: flex; align-items: center; gap: 3px; height: 12px; margin-left: 1px; }
.side-grip { flex: 1; height: 6px; border: 1px solid #a0a0a0; border-width: 1px 1px 1px 0; box-shadow: inset 0 1px 0 #fff, inset 0 -1px 0 #fff; }
.side-head button { width: 11px; height: 11px; border: 1px solid #696969; border-color: #fff #696969 #696969 #fff; }
.side-head svg { width: 7px; height: 7px; }
.tree {
  flex: 1;
  margin: 2px 0 0;
  padding: 1px 0 0;
  border: 3px double #696969;
  border-color: #a0a0a0 #696969 #696969 #a0a0a0;
  background: #fff;
  list-style: none;
  font-family: "DejaVu Sans Condensed", "Open Sans", sans-serif;
  font-size: 11px;
}
.tree li { display: flex; align-items: center; height: 16px; line-height: 16px; white-space: nowrap; }
.guide { width: 20px; height: 16px; flex: none; }
.tree span { margin-left: 4px; padding: 0 2px; }
.tree .bold { font-weight: bold; }
.tree .selected { background: #3399ff; color: #fff; outline: 1px dotted #d07a2a; outline-offset: -1px; }

.context-menu {
  position: absolute;
  left: 115px;
  top: 140px;
  display: flex;
  flex-direction: column;
  width: 199px;
  padding: 2px;
  border: 1px solid #979797;
  background: linear-gradient(90deg, #f1f1f1 30px, #e0e0e0 30px, #e0e0e0 31px, #f1f1f1 31px);
  box-shadow: 3px 3px 2px rgba(0, 0, 0, .5);
}
.context-menu button { justify-content: flex-start; height: 24px; padding-left: 33px; border: 1px solid transparent; border-radius: 3px; }
.context-menu button:disabled { color: #6d6d6d; }
.context-menu .hot { border-color: #aecff7; background: linear-gradient(rgba(240, 244, 250, .7), rgba(220, 230, 246, .7)); }

.page-tabs { display: flex; height: 21px; border-top: 1px solid #3399ff; font: 13px "DejaVu Sans Condensed", "Open Sans", sans-serif; }
.page-tab { align-items: stretch; height: 19px; }
.page-tab > span { display: flex; align-items: center; padding: 0 6px 0 0; border-right: 1px solid #8f8f8f; border-bottom: 1px solid #8f8f8f; border-radius: 0 0 3px 0; }
.slant { width: 14px; height: 19px; }
.lead { width: 24px; height: 19px; margin-left: 1px; }
.page-tab.active { margin-top: -1px; height: 20px; font-weight: bold; font-size: 14px; }
.page-tab.active > span { padding-left: 3px; border-color: #3399ff; background: #fff; }
.page-scroll { display: flex; gap: 6px; margin: 0 8px 0 auto; }
.page-scroll svg { width: 8px; height: 10px; }

.status-bar { display: flex; align-items: center; height: 27px; border-top: 1px solid #a0a0a0; }
.progress { width: 120px; height: 19px; margin-left: 2px; border: 1px solid #a0a0a0; }
.cell { display: flex; align-items: center; height: 22px; border-left: 1px solid #808080; }
.cell.kbd { width: 86px; margin-left: 6px; padding-left: 60px; }
.cell.tools { gap: 6px; padding-left: 6px; }
.timer { gap: 6px; height: 22px; margin-left: auto; padding: 0 22px 0 9px; border-left: 1px solid #808080; }

.taskbar {
  position: relative;
  display: flex;
  height: 48px;
  border-top: 1px solid #1d3a58;
  box-shadow: inset 0 1px 0 #9cc3e2;
  background: linear-gradient(90deg, #1c5288 0, #2a6ba2 60px, #2272ae 110px, #369bd0 145px, #3ba3d8 280px, #3a98d0 420px, #3b96cd 600px, #3288c4 880px, #3a8bcb 1030px, #2678c2 1070px, #2678c2 1130px, #2070b0 1210px, #2c78be 1250px, #2a76bc 1330px, #1f6ab0 1380px, #1b5ea2 1415px, #194a80 1445px, #1a4a80 1700px, #183f6c 100%);
}
.taskbar::before {
  content: "";
  position: absolute;
  left: 1280px;
  top: 1px;
  width: 110px;
  height: 46px;
  background: radial-gradient(circle 300px at -50px 188px, transparent 188px, rgba(178, 212, 248, .95) 197px 202px, transparent 210px);
}
.start { width: 71px; padding-right: 5px; }
.start svg { width: 43px; height: 43px; }
.task { position: relative; width: 70px; }
.task svg { width: 39px; height: 40px; }
.task.open::before {
  content: "";
  position: absolute;
  inset: 0 2px 1px 1px;
  border: 1px solid #d4ecf9;
  border-radius: 3px;
  outline: 1px solid #1d5278;
  background: linear-gradient(160deg, rgba(255, 255, 255, .55), rgba(255, 255, 255, .2) 50%, rgba(255, 255, 255, .08));
}
.task.stack { padding-right: 9px; }
.task.stack::before { right: 10px; box-shadow: 3px 0 0 #3786b4, 4px 0 0 #9fd0ea, 7px 0 0 #3786b4, 8px 0 0 #9fd0ea; }
.task.current::before { background: linear-gradient(160deg, rgba(255, 255, 255, .85), rgba(255, 255, 255, .4) 50%, rgba(255, 255, 255, .35)); }
.task > svg { position: relative; }

.tray { display: flex; align-items: center; margin-left: auto; color: #fff; }
.tray svg { width: 20px; height: 20px; }
.lang { width: 26px; margin-bottom: 4px; padding-left: 3px; font-size: 13px; }
.lb { display: flex; justify-content: center; width: 24px; margin-bottom: 4px; }
.zh { color: #b8d4ff; font: bold 17px "Noto Sans CJK SC", sans-serif; }
.more { width: 38px; }
.more::before { content: ""; border: 5px solid transparent; border-top: 0; border-bottom-color: #fff; }
.sys { display: flex; justify-content: center; width: 30px; }
.clock { display: flex; flex-direction: column; align-items: center; width: 106px; padding-left: 2px; line-height: 22px; }
.show-desktop { align-self: stretch; width: 14px; border: 1px solid #6f8fae; background: linear-gradient(135deg, #6583a4, #24466d 50%); }
.watermark {
  position: absolute;
  right: 11px;
  bottom: 9px;
  color: rgba(255, 255, 255, .6);
  font: 16px/20px "Liberation Sans", sans-serif;
}
</style>
